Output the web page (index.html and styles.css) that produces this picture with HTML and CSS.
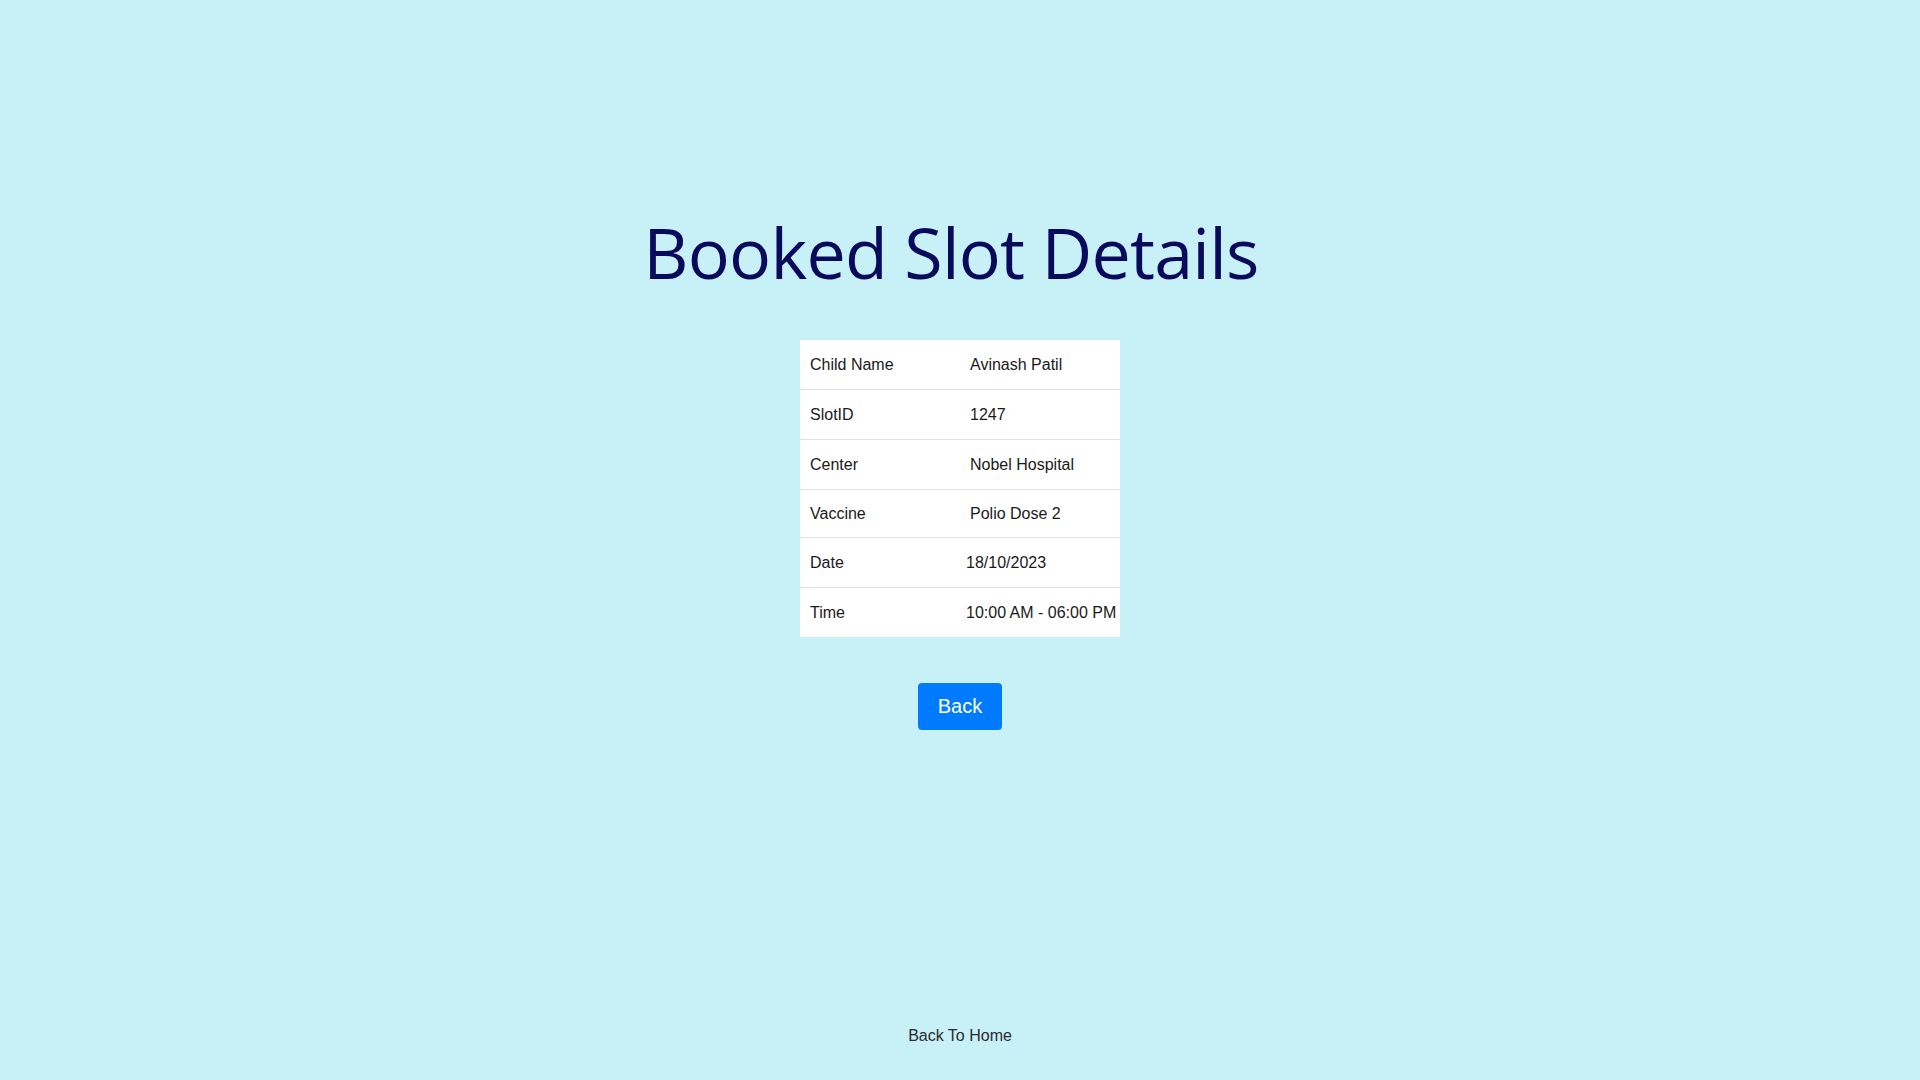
FILE: index.html
```html
<!DOCTYPE html>
<html>
<head>
<meta charset="utf-8">
<link rel="stylesheet" href="styles.css">
</head>
<body>
<main class="page">
  <h1 class="title">Booked Slot Details</h1>
  <table class="details">
    <tr><td class="label">Child Name</td><td class="value">Avinash Patil</td></tr>
    <tr><td class="label">SlotID</td><td class="value">1247</td></tr>
    <tr><td class="label">Center</td><td class="value">Nobel Hospital</td></tr>
    <tr class="short"><td class="label">Vaccine</td><td class="value">Polio Dose 2</td></tr>
    <tr><td class="label">Date</td><td class="value tight">18/10/2023</td></tr>
    <tr><td class="label">Time</td><td class="value tight">10:00 AM - 06:00 PM</td></tr>
  </table>
  <button class="back-btn">Back</button>
</main>
<footer class="footer">Back To Home</footer>
</body>
</html>
```
FILE: styles.css
```css
html, body {
  margin: 0;
  padding: 0;
}
body {
  background: #c8f0f7;
  font-family: "Liberation Sans", Arial, sans-serif;
  min-height: 1080px;
  display: flex;
  flex-direction: column;
}
.page {
  display: flex;
  flex-direction: column;
  align-items: center;
  padding-top: 204px;
  flex: 1;
}
.title {
  margin: 0;
  padding-right: 18px;
  font-family: "Open Sans", sans-serif;
  font-weight: 400;
  font-size: 70px;
  line-height: 96px;
  color: #0a0a5c;
  letter-spacing: -0.8px;
}
.details {
  margin-top: 40px;
  width: 320px;
  border-collapse: collapse;
  background: #ffffff;
  table-layout: fixed;
}
.details td {
  height: 49px;
  padding: 0;
  border-bottom: 1px solid #dee2e6;
  font-size: 16px;
  color: #1a1a1a;
  vertical-align: middle;
  white-space: nowrap;
}
.details tr:last-child td {
  border-bottom: none;
}
.details tr.short td {
  height: 47px;
}
.label {
  width: 150px;
  padding-left: 10px !important;
}
.value {
  padding-left: 10px !important;
}
.value.tight {
  padding-left: 6px !important;
}
.back-btn {
  margin-top: 46px;
  width: 84px;
  height: 47px;
  border: none;
  border-radius: 4px;
  background: #007bff;
  color: #ffffff;
  font-family: "Liberation Sans", Arial, sans-serif;
  font-size: 20px;
  padding: 0;
}
.footer {
  text-align: center;
  font-size: 16px;
  color: #2b2b2b;
  padding-bottom: 35px;
}
```
